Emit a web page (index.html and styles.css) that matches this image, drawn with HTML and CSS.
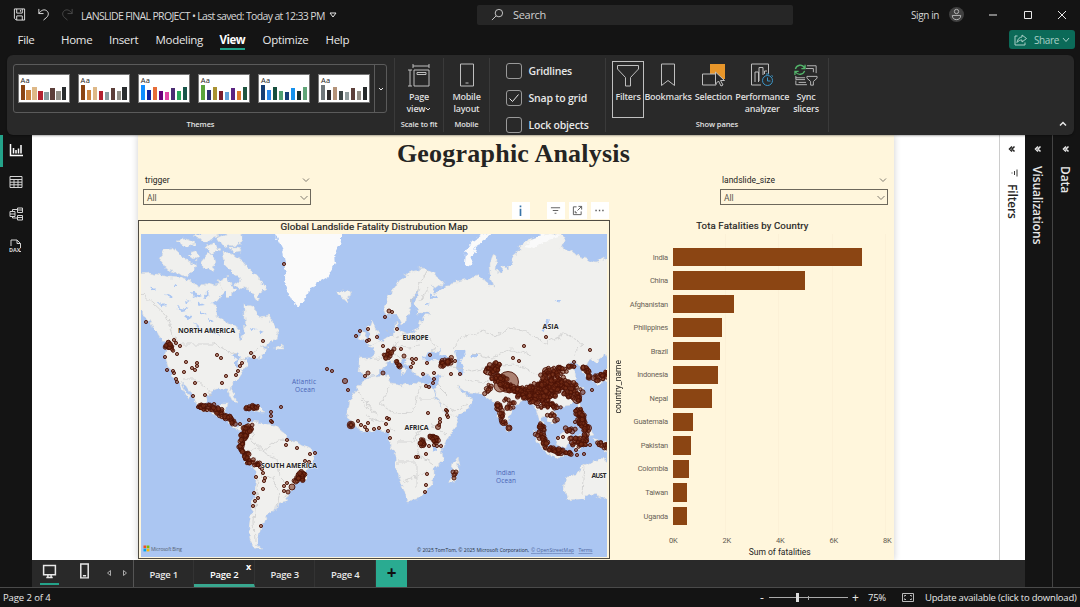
FILE: index.html
```html
<!DOCTYPE html>
<html lang="en">
<head>
<meta charset="utf-8">
<title>LANSLIDE FINAL PROJECT</title>
<link rel="stylesheet" href="styles.css">
</head>
<body>
<div class="app">
  <header class="titlebar">
    <svg class="ico" viewBox="0 0 14 14"><path d="M1.500 1h11v12H3.500l-2-2zM4 1v4.500h6V1M4 13V8.500h6V13M8 2v2"/></svg>
    <svg class="ico" viewBox="0 0 14 14"><path d="M2 1v5h5M2 6C4.500 2 8 1 10.500 3s2 5 0 7L7 13"/></svg>
    <svg class="ico dim" viewBox="0 0 14 14"><path d="M12 1v5H7M12 6C9.500 2 6 1 3.500 3s-2 5 0 7L7 13"/></svg>
    <span class="doc">LANSLIDE FINAL PROJECT • Last saved: Today at 12:33 PM</span>
    <svg class="tri" viewBox="0 0 8 6"><path d="M1 1h6L4 5z"/></svg>
    <div class="search"><svg class="ico" viewBox="0 0 14 14"><circle cx="8.500" cy="5.500" r="4"/><path d="M5.500 8.500L1 13"/></svg><span>Search</span></div>
    <span class="signin">Sign in</span>
    <svg class="avatar" viewBox="0 0 16 16"><circle class="disc" cx="8" cy="8" r="8"/><circle cx="8" cy="4.800" r="2.300"/><path d="M3.500 9h9c0 3-2 4.500-4.500 4.500S3.500 12 3.500 9z"/></svg>
    <div class="wins">
      <svg viewBox="0 0 10 10"><path d="M1 5h8"/></svg>
      <svg viewBox="0 0 10 10"><path d="M1.500 1.500h7v7h-7z"/></svg>
      <svg viewBox="0 0 10 10"><path d="M1 1l8 8M9 1L1 9"/></svg>
    </div>
  </header>
  <nav class="menu">
    <span>File</span><span>Home</span><span>Insert</span><span>Modeling</span><span><b>View</b></span><span>Optimize</span><span>Help</span>
    <div class="share"><svg viewBox="0 0 14 12"><path d="M3.500 2H1v9h10V8.500M8 1l4.500 3.500L8 8V6C6 6 4.500 6.500 3 8.500 3.500 5 5.500 3.200 8 3z"/></svg><span>Share</span><svg class="chev" viewBox="0 0 8 6"><path d="M1 1l3 3.500L7 1"/></svg></div>
  </nav>

  <section class="ribbon">
    <div class="group themes">
      <div class="gallery"><div class="thumbs" id="thumbs"></div><div class="more"><svg viewBox="0 0 8 6"><path d="M2 2l2 2 2-2"/></svg></div></div>
      <div class="caption">Themes</div>
    </div>
    <div class="group scale">
      <div class="cmd"><svg viewBox="0 0 24 24"><path d="M6 1v4M22 1v4M6 3h16M1 7h4M1 23h4M3 7v16M7 7h15v16H7zM10 9.500h9v2h-9z"/></svg><span>Page<br>view<svg class="caret" viewBox="0 0 6 6"><path d="M1 2l2 2 2-2"/></svg></span></div>
      <div class="caption">Scale to fit</div>
    </div>
    <div class="group mobile">
      <div class="cmd"><svg viewBox="0 0 24 24"><path d="M5.500 1h13v22h-13zM10.500 20h3"/></svg><span>Mobile<br>layout</span></div>
      <div class="caption">Mobile</div>
    </div>
    <div class="group checks">
      <div><i class="box"></i>Gridlines</div>
      <div><i class="box"><svg viewBox="0 0 14 14"><path d="M2.500 7.500l3 3 6-7"/></svg></i>Snap to grid</div>
      <div><i class="box"></i>Lock objects</div>
    </div>
    <div class="group panes">
      <div class="cmds">
        <div class="cmd sel"><svg viewBox="0 0 24 24"><path d="M1.500 1.500h21v3.500l-8 8.500v8.500h-5v-8.500L1.500 5z"/></svg><span>Filters</span></div>
        <div class="cmd"><svg viewBox="0 0 24 24"><path d="M5.500 1h13v21.500L12 17.500l-6.500 5z"/></svg><span>Bookmarks</span></div>
        <div class="cmd"><svg viewBox="0 0 24 24"><path class="orange" d="M8 1h15v15H8z"/><path class="mask" d="M.5 11h13.500v11H.5z"/><path class="mask" d="M13.500 9v12l3-3 2.500 5 2-1-2.500-4.500h4z"/></svg><span>Selection</span></div>
        <div class="cmd"><svg viewBox="0 0 24 24"><path d="M11 22H1.500V1h17v10M5 19V9h3.500v10M9 18V4.500h4V12M14.500 11V8H17"/><g class="blue"><circle cx="17.500" cy="17.500" r="5"/><path d="M17.500 14.500v3.500h3M16 11h3M21.500 12.500l1.500 1"/></g></svg><span>Performance<br>analyzer</span></div>
        <div class="cmd"><svg viewBox="0 0 26 24"><path d="M14 2h10v8M13 5h8v4M2 13v4h10M2 15h10M2 18v4.500h12M5 20h8"/><path class="mask" d="M14 13.500h11v2L21 19v4h-3v-4l-4-3.500z"/><path class="green" d="M12 1v4H8M1 12V8h4M1.500 5.500C3 .5 9 0 11.500 4.500M11.500 7.500C10 12 4 12.500 1.500 8.500"/></svg><span>Sync<br>slicers</span></div>
      </div>
      <div class="caption">Show panes</div>
    </div>
    <svg class="collapse" viewBox="0 0 10 8"><path d="M2 5.500l3-3 3 3"/></svg>
  </section>

  <main class="main">
    <aside class="rail">
      <div class="on"><svg viewBox="0 0 14 14"><path d="M1.500 1v11.500H14M4.500 10.500V5M7 10.500V7M9.500 10.500V5.500M12 10.500V2" stroke-width="1.500"/></svg></div>
      <div><svg viewBox="0 0 14 14"><path d="M1 1.500h12v11H1zM1 4.500h12M1 7.200h12M1 9.800h12M5 4.500v8M9 4.500v8"/></svg></div>
      <div><svg viewBox="0 0 14 14"><path d="M1 4.500h5v5H1zM1 7h5M8.500 1h5v4.500h-5zM8.500 3h5M8.500 8.500h5V13h-5zM8.500 10.500h5M3.500 4.500V2.500h5M3.500 9.500v1.500h5"/></svg></div>
      <div><svg viewBox="0 0 14 14"><path d="M2 7V1h6l3.500 3.500V9M8 1v3.500h3.500M10 12.500h2"/><text x="0" y="12.500">DAX</text></svg></div>
    </aside>

    <div class="stage">
      <div class="canvas">
        <article class="report">
          <h1>Geographic Analysis</h1>
          <div class="slicers">
            <div class="slicer"><div class="lab"><span>trigger</span><svg viewBox="0 0 8 6"><path d="M1 1.500l3 3 3-3"/></svg></div><div class="drop"><span>All</span><svg viewBox="0 0 8 6"><path d="M.5 1l3.500 3.500L7.500 1"/></svg></div></div>
            <div class="slicer"><div class="lab"><span>landslide_size</span><svg viewBox="0 0 8 6"><path d="M1 1.500l3 3 3-3"/></svg></div><div class="drop"><span>All</span><svg viewBox="0 0 8 6"><path d="M.5 1l3.500 3.500L7.500 1"/></svg></div></div>
          </div>
          <div class="visuals">
            <section class="mapvis">
              <div class="tools">
                <i><svg viewBox="0 0 12 12"><path class="info" d="M6 .5v2M6 4v8"/></svg></i>
                <i><svg viewBox="0 0 12 12"><path d="M1 3h10M3 6h6M5 9h2"/></svg></i>
                <i><svg viewBox="0 0 12 12"><path d="M5 2H1.500v8.500h8.500V7M7 1.500h3.500V5M10.500 1.500L6 6M3.500 6.500v2h2"/></svg></i>
                <i><svg viewBox="0 0 12 12"><path class="dots" d="M1.500 6h1.500M5.300 6h1.500M9 6h1.500"/></svg></i>
              </div>
              <h2>Global Landslide Fatality Distrubution Map</h2>
              <svg class="map" viewBox="141 234 466 323">
                <defs><filter id="coast" x="-5%" y="-5%" width="110%" height="110%"><feTurbulence type="fractalNoise" baseFrequency="0.16" numOctaves="3" seed="4"/><feDisplacementMap in="SourceGraphic" scale="7" xChannelSelector="R" yChannelSelector="G"/></filter></defs>
                <rect class="sea" x="141" y="234" width="468" height="325"/>
                <g filter="url(#coast)">
                  <g class="land">
                    <path d="M136 274L150 273 160 275 170 277 181 278 190 281 199 287 209 283 217 285 224 281 229 287 221 295 215 305 216 316 228 323 238 328 240 339 245 333 244 318 244 304 254 307 260 318 269 316 276 328 279 337 268 344 261 347 267 348 261 357 252 358 246 364 242 372 236 381 230 388 235 397 237 402 233 400 228 390 216 389 209 394 206 404 211 412 219 412 222 403 227 403 225 413 233 416 232 425 239 427 246 425 244 431 233 429 225 419 212 414 200 409 193 397 186 386 180 382 190 398 187 397 178 383 173 376 168 366 165 354 167 345 160 337 151 324 146 316 136 308z"/>
                    <path d="M243 431L250 422 262 423 273 425 283 432 288 440 300 444 315 452 314 461 308 470 306 480 296 485 291 492 286 501 278 503 276 510 269 513 264 520 261 528 258 538 257 544 263 549 256 549 250 541 249 526 252 509 254 496 256 481 255 471 246 462 240 450 238 443z"/>
                    <path d="M383 307L388 298 395 287 402 277 414 270 424 268 433 273 443 281 442 287 432 285 435 293 445 288 450 282 463 280 477 276 485 280 489 286 494 286 490 274 489 264 493 254 497 260 496 271 501 273 502 264 508 269 513 264 511 259 519 252 519 246 528 239 540 237 548 230 565 236 562 248 578 256 596 262 615 255 615 352 604 356 597 362 590 359 587 365 592 376 586 376 581 366 573 360 568 364 575 371 576 381 582 389 579 398 571 405 558 407 552 405 556 416 555 421 550 423 545 415 541 417 545 429 541 424 537 413 534 403 526 399 516 405 510 414 507 427 502 425 497 411 494 402 487 397 477 393 466 392 457 386 461 391 471 398 472 403 463 413 449 419 442 409 434 389 439 383 443 375 431 376 421 373 420 377 415 375 411 367 402 359 400 362 406 370 403 374 395 362 387 362 382 369 375 375 367 376 358 371 360 358 373 358 374 350 368 346 380 342 389 336 395 331 395 323 399 330 407 334 418 329 421 320 430 313 418 313 414 303 420 288 411 298 411 308 407 319 401 324 397 315 386 315z"/>
                    <path d="M367 377L383 375 389 376 391 384 403 386 414 382 427 384 432 389 439 404 446 416 455 415 459 417 456 427 447 439 442 449 443 461 434 468 434 477 429 487 420 498 408 501 403 488 397 470 396 456 390 443 387 431 379 430 365 433 354 427 347 417 350 401 357 388z"/>
                    <path d="M564 488L566 478 576 475 582 466 594 461 602 458 615 470 615 496 602 499 592 494 580 499 567 500z"/>
                    <path d="M449 482l4-18 4-6 2 8-5 17zM366 344l4-7-2-7 4-10 4 10 4 11-5 3zM358 339l3-9 5 3-2 7zM337 292l7-1 7-1 1 5-6 5-7-2zM507 425l3 1 0 6-4-1z"/>
                    <path d="M534 430l7 5 12 18-5 1-11-12zM549 452l10 2 8 3-8 1-10-3zM556 438l11-9 5 3-5 16-9-1zM577 401l6 9 3 13 8 11-8 1-5-13-4-9zM573 437l9-2-5 6 4 8-8-1zM592 439l14 3 8 8-10 1zM593 381l8-5 8-10 5 2-6 12-12 5z"/>
                    <path d="M245 406l13 2 8 4-8 0-12-4zM275 346l7-2 1 5-8 0z"/>
                    <path d="M164 249l8 -1 10 8 15 10-9 11-12-4-9-4-6-8zM176 240l10-1 9 4-8 5zM193 236l14-5 12 5-13 5zM202 260l5-6 7 1 2 7-4 9-10-3zM206 246l9-3 4 8-8 3zM222 252l9 1 11 8 6 7 9 7 10 14-6 1-3 13-9-14-15-3 8-6-10-8-8-9zM217 238l12-6 14 0-3 12-17 3zM218 280l8-3 9 13-6 6-7-7zM187 254l8-3 5 6-5 4zM230 247l8 0 3 5-8 1z"/>
                  </g>
                  <path class="ice" d="M272 228L283 250 285 263 284 279 291 299 298 308 304 299 315 284 328 276 336 263 335 253 341 240 341 228zM465 264l1-13 6-9 10-7 10-3-7 8-9 6-4 10-1 10zM524 246l10-8 15-5 13 3-16 5-10 7z"/>
                  <path class="water" d="M424 358l4-8 8 2 5-4-1 5 10 5-7 4-9-2-9 2zM455 350l8 0 1 6-3 6 5 11-5 3-5-8 1-8zM471 354l5-1 0 5-4 1zM556 300l5 0-2 4zM541 332l7-13 1 3-5 11zM231 356l7-3 4 4-8 2zM235 361l3-3 1 9-4-1zM244 360l8-1-3 4zM432 446l5 0-1 5-4-1zM404 277l-4 10zM165 294l9 4-5 1zM177 306l12 3-8 2zM192 291l9 4-7 3zM209 290l-7 8 5-2zM194 322l8 8-3 1zM201 311l7 5-7-2zM151 286l5 5-6-1zM210 328l10 7-10-3zM429 293l9 4-9 1zM425 302l5 2-5 1zM173 283l5 4-4 0zM184 299l7 3-6 1zM199 302l6 3-7 1zM186 314l5 4-4 1zM219 300l-7 4 3 1zM208 318l5 3-5 0zM160 303l7 3-6 1zM250 326l6 2-5 2zM259 330l5 2-4 1z"/>
                  <path class="line" d="M173 344h42l16 9 14 8 15-13M184 379l12 0 9 8 7 8M176 343l-11-29-23-21M251 424l2 17 11 10 14-11 22 1M247 453l9-6 11 8 10 3 3 19 10 10-5 11M256 456l6 11-1 12 11-1 7 13-3 16M258 478l-2 22-2 20 1 22M386 330l10 8 7-5 12 7 14-3 8 11-10 5M375 358l16 1 2-14 14 2 14-1M397 341l-5 12 10 7 13-3M429 287l-9 15M411 301l8-15 9-17M454 348l7-11 22-6 13 5 13-8 15 2 20 13 22-9 16 9-9 14M473 353l18 5 20-8 20 6M490 366l25-2 22 10 21-2M449 366l23 5 15-3 6 12M465 380l20 3 13-9M515 389l13 4 15-8M391 386l-11 18 15 10 18-1 7-27M420 399l16 0M361 401l18 16M357 391l22 26M365 416l22 8 9 8M397 442h15l10-14M398 462h18v26M404 482l25-11M423 439l19 6M416 436l3 21 15 8M431 423l14 11M440 401l14 10 14-8M436 383l13 13M584 464l-2 31"/>
                </g>
                <g id="bubbles"></g>
                <g class="place">
                  <text x="178" y="332.500" textLength="57">NORTH AMERICA</text><text x="261" y="467.500" textLength="56">SOUTH AMERICA</text><text x="402.500" y="340" textLength="26">EUROPE</text><text x="542.500" y="328.500" textLength="16">ASIA</text><text x="404.500" y="430" textLength="24">AFRICA</text><text x="591.500" y="478" textLength="15">AUST</text>
                </g>
                <g class="ocean"><text x="292" y="383.500" textLength="24">Atlantic</text><text x="295" y="391.500" textLength="20">Ocean</text><text x="496" y="474.500" textLength="19">Indian</text><text x="496" y="482.500" textLength="20">Ocean</text></g>
                <g class="credit"><path fill="#f25022" d="M143.500 545.500h2.700v2.700h-2.700z"/><path fill="#7fba00" d="M146.700 545.500h2.700v2.700h-2.700z"/><path fill="#00a4ef" d="M143.500 548.700h2.700v2.700h-2.700z"/><path fill="#ffb900" d="M146.700 548.700h2.700v2.700h-2.700z"/><text class="bing" x="151" y="550.500" textLength="31">Microsoft Bing</text><text x="417" y="552" textLength="112">© 2025 TomTom, © 2025 Microsoft Corporation,</text><text class="link" x="531" y="552" textLength="43">© OpenStreetMap</text><text class="link" x="578.500" y="552" textLength="14">Terms</text></g>
              </svg>
            </section>
            <section class="chart">
              <h2>Tota Fatalities by Country</h2>
              <div class="plot"><div class="ytitle"><span>country_name</span></div><div class="rows" id="rows"></div></div>
              <div class="ticks"><span>0K</span><span>2K</span><span>4K</span><span>6K</span><span>8K</span></div>
              <div class="xtitle">Sum of fatalities</div>
            </section>
          </div>
        </article>
      </div>
      <footer class="tabs">
        <div class="views">
          <div class="active"><svg viewBox="0 0 14 14"><path d="M1.500 1.500h11v8.500h-11zM4 12.500h6M5.500 10v2.500M8.500 10v2.500" stroke-width="1.400"/></svg></div>
          <div><svg viewBox="0 0 14 16"><path d="M3.500 1h7v13h-7zM5.500 12h3" stroke-width="1.400"/></svg></div>
          <svg class="arr" viewBox="0 0 6 8"><path d="M4.500 1.500v5L1.500 4z"/></svg><svg class="arr" viewBox="0 0 6 8"><path d="M1.500 1.500v5L4.500 4z"/></svg>
        </div>
        <div class="tab">Page 1</div><div class="tab cur">Page 2<i>x</i></div><div class="tab">Page 3</div><div class="tab">Page 4</div><div class="add">+</div>
      </footer>
    </div>

    <aside class="pane light"><svg viewBox="0 0 8 8"><path d="M4 1.500L1.500 4 4 6.500M6.500 1.500L4 4 6.500 6.500"/></svg><svg class="fil" viewBox="0 0 8 8"><path d="M7 .5v7M4.500 2v4M2 3.500v1"/></svg><span>Filters</span></aside>
    <aside class="pane viz"><svg viewBox="0 0 8 8"><path d="M4 1.500L1.500 4 4 6.500M6.500 1.500L4 4 6.500 6.500"/></svg><span>Visualizations</span></aside>
    <aside class="pane data"><svg viewBox="0 0 8 8"><path d="M4 1.500L1.500 4 4 6.500M6.500 1.500L4 4 6.500 6.500"/></svg><span>Data</span></aside>
  </main>

  <footer class="status">
    <span class="pg">Page 2 of 4</span>
    <span class="sign">-</span><div class="slider"><i></i><b></b></div><span class="sign">+</span>
    <span class="pct">75%</span>
    <svg viewBox="0 0 12 9"><path d="M.5.5h11v8H.5zM2.500 3.500v-1h1.500M8 2.500h1.500v1M2.500 5.500v1h1.500M8 6.500h1.500v-1"/></svg>
    <span class="upd">Update available (click to download)</span>
  </footer>
</div>
<script src="script.js"></script>
</body>
</html>
```
FILE: styles.css
```css
* { box-sizing: border-box; }
body { margin: 0; background: #141414; font-family: "Open Sans", "Noto Sans", sans-serif; color: #e8e8e8; overflow: hidden; }
svg { display: block; fill: none; stroke: currentColor; }
h1, h2 { margin: 0; }
i { font-style: normal; }
.app { width: 1080px; height: 607px; display: grid; grid-template-rows: 29px 26px 79.500px 452.500px 20px; }

.titlebar { display: flex; align-items: center; padding-left: 13px; font-size: 10.500px; }
.titlebar svg { flex: none; }
.titlebar .ico { width: 13px; height: 13px; margin-right: 11px; }
.titlebar .dim { color: #4c4c4c; margin-right: 7px; }
.doc { width: 245px; letter-spacing: -.68px; word-spacing: .1px; white-space: nowrap; padding-top: 3px; color: #d8d8d8; }
.tri { width: 8px; height: 6px; margin-left: 3px; }
.search { width: 316px; height: 20px; margin-left: 140px; background: #262626; border-radius: 2px; display: flex; align-items: center; padding-left: 14px; font-size: 11px; letter-spacing: -.3px; color: #d0d0d0; }
.search .ico { margin-right: 9px; }
.signin { width: 38px; margin-left: 118px; letter-spacing: -.4px; white-space: nowrap; font-size: 10px; color: #d5d5d5; }
.avatar { width: 15px; height: 15px; color: #bbb; }
.disc { fill: #404040; stroke: none; }
.wins { display: flex; gap: 24.500px; margin-left: 24px; }
.wins svg { width: 10px; height: 10px; }

.menu { display: grid; grid-template-columns: 43.500px 48px 46.500px 64px 43px 63px 683.500px 66px; padding-left: 17.500px; font-size: 11.500px; letter-spacing: -.3px; line-height: 22px; }
.menu b { display: inline-block; color: #fff; border-bottom: 2px solid #1fa58a; height: 21px; letter-spacing: -.55px; }
.share { grid-column: 8; height: 19px; margin-top: 1px; border-radius: 3px; background: #0b6a58; display: flex; align-items: center; padding-left: 5px; gap: 6px; font-size: 10px; letter-spacing: -.4px; color: #a8cfc6; }
.share svg { width: 14px; height: 12px; flex: none; }
.share .chev { width: 8px; height: 6px; margin-left: -3px; }

.ribbon { position: relative; z-index: 2; margin: 0 6px 0 7px; background: #292929; border-radius: 6px; display: flex; overflow: hidden; box-shadow: 0 1px 2px #0005; }
.group { display: flex; flex-direction: column; border-right: 1px solid #3a3a3a; margin: 3px 0; }
.themes { width: 388px; padding-left: 5px; }
.gallery { margin: 6px 7px 0 1px; height: 49px; border: 1px solid #5b5b5b; border-radius: 3px; display: flex; }
.thumbs { width: 361px; border-right: 1px solid #5b5b5b; display: flex; gap: 8.100px; padding: 9px 3.500px; flex: none; }
.thumb { width: 52px; height: 29px; background: #fff; padding: 0 2px 2px; display: flex; flex-direction: column; justify-content: space-between; border: 1px solid #777; color: #222; font-size: 7.500px; line-height: 10px; letter-spacing: .3px; }
.thumb div { display: flex; align-items: flex-end; gap: 1.900px; height: 15px; }
.thumb i { width: 4.300px; }
.more { flex: 1; display: grid; place-items: center; }
.more svg { width: 8px; }
.caption { font-size: 7.500px; line-height: 10px; font-weight: 600; text-align: center; color: #e2e2e2; margin-top: auto; padding-bottom: 3px; white-space: nowrap; letter-spacing: -.1px; }
.themes .caption { padding-right: 5px; }
.panes .caption { padding-right: 6px; }
.scale { width: 49px; } .mobile { width: 46px; }
.cmd { display: flex; flex-direction: column; align-items: center; text-align: center; font-size: 9px; font-weight: 600; line-height: 12.500px; letter-spacing: -.24px; color: #dedede; white-space: nowrap; padding-top: 5px; }
.cmd > svg { width: 24px; height: 24px; margin-bottom: 3.500px; color: #bfbfbf; }
.caret { display: inline-block; width: 6px; height: 6px; }
.checks { width: 116px; padding: 4.500px 0 0 16px; font-size: 10.500px; font-weight: 600; letter-spacing: -.2px; gap: 11px; white-space: nowrap; }
.checks div { display: flex; gap: 6.500px; height: 16px; align-items: center; flex: none; }
.box { width: 16px; height: 16px; border: 1px solid #9a9a9a; border-radius: 3px; }
.panes { width: 223px; padding-left: 6px; }
.cmds { display: grid; grid-template-columns: 32px 48px 43px 54.500px 33px; }
.sel { height: 57px; margin-top: 3px; padding-top: 1.500px; border: 1px solid #c0c0c0; }
.orange { fill: #e8962a; stroke: none; } .mask { fill: #292929; }
.blue { stroke: #3c97c9; } .green { stroke: #53b56b; stroke-width: 1.400; }
.collapse { width: 10px; height: 8px; position: absolute; right: 6px; bottom: 7px; stroke-width: 1.500; }

.main { display: flex; }
.rail { width: 32.400px; flex: none; color: #d4d4d4; }
.rail div { height: 32px; display: grid; place-items: center; border-left: 3px solid transparent; padding: 0 3px 1px 0; }
.rail svg { width: 14px; height: 14px; }
.rail .on { color: #fff; border-color: #24a38a; }
.rail text { font-size: 5.500px; fill: currentColor; stroke: none; font-weight: 700; }
.stage { width: 966.600px; flex: none; display: grid; grid-template-rows: 425px 27.500px; }
.canvas { background: #fff; padding-left: 105.600px; overflow: hidden; }
.report { width: 756px; height: 425px; background: #fff6dc; box-shadow: 0 0 7px #0003; display: grid; grid-template-rows: 39px 46px 340px; color: #252423; }
h1 { font: bold 26px/37px "Liberation Serif", serif; text-align: center; padding-right: 5px; letter-spacing: .22px; }
.slicers { display: flex; justify-content: space-between; padding: 0 6px 0 5px; }
.slicer { width: 168px; font: 8.500px/12px Roboto, sans-serif; }
.lab { display: flex; justify-content: space-between; align-items: center; padding: 0 1px 0 2px; height: 13px; }
.slicer svg { width: 8px; height: 6px; color: #807b70; }
.drop { margin-top: 2.500px; height: 16px; border: 1px solid #6d685c; display: flex; align-items: center; justify-content: space-between; padding: 1px 2px 0 3px; color: #5a564d; }
.visuals { display: flex; }
.mapvis { position: relative; width: 472.500px; height: 339px; border: 1px solid #4f4b42; border-top-width: 1.500px; padding: 0 2px; flex: none; }
h2 { font: 400 9.800px/11.500px Roboto, sans-serif; letter-spacing: .08px; text-align: center; -webkit-text-stroke: .2px; }
.mapvis h2 { height: 13px; }
.map { width: 466px; height: 323px; stroke: none; overflow: hidden; }
.tools { position: absolute; right: .5px; top: -18.500px; display: flex; gap: 4px; }
.tools i { width: 18px; height: 17px; background: #fff; display: grid; place-items: center; }
.tools i:first-child { margin-right: 13px; }
.tools svg { width: 11px; height: 11px; color: #555; }
.info { stroke-width: 1.800; stroke: #3974a8; } .dots { stroke-width: 1.500; }
.sea { fill: #abc6f2; } .land { fill: #f0f0ee; stroke: #dddddb; stroke-width: .5; }
.ice { fill: #fafafa; } .water { fill: #abc6f2; }
.line { stroke: #c9c9c9; stroke-width: .7; fill: none; }
#bubbles { fill: #7b321a; fill-opacity: .58; stroke: #4d1307; stroke-width: .9; }
.place { font: bold 7px "Open Sans", sans-serif; fill: #282828; stroke: #fff; stroke-width: 1px; stroke-opacity: .6; paint-order: stroke; }
.ocean { font: 6.500px "Open Sans", sans-serif; fill: #4964b5; }
.credit { font: 5px "Open Sans", sans-serif; fill: #25303d; }
.bing { fill: #586475; } .link { fill: #5068a0; text-decoration: underline; }
.chart { flex: 1; font-family: Roboto, sans-serif; }
.chart h2 { line-height: 12px; height: 14px; font-size: 9.600px; letter-spacing: .15px; }
.plot { display: flex; height: 301px; }
.ytitle { width: 14px; display: grid; place-items: center; padding: 6px 0 0 2px; }
.ytitle span { writing-mode: vertical-rl; transform: rotate(180deg); font-size: 8.500px; line-height: 12px; }
.rows { padding-top: 14.300px; display: flex; flex-direction: column; gap: 5.050px; width: 263px; background: repeating-linear-gradient(to right, transparent 0 52.500px, #fcf1d7 52.500px 53.500px) 48px 0 no-repeat; }
.row { height: 18.500px; display: flex; align-items: center; }
.row span { width: 43.500px; margin-right: 5px; text-align: right; font-size: 7.500px; letter-spacing: -.2px; color: #696257; }
.row div { height: 18.500px; background: #8b4513; }
.ticks { display: flex; margin: 0 -20px 0 36px; font-size: 7.500px; line-height: 12px; letter-spacing: -.2px; color: #5f5a50; }
.ticks span { width: 53.500px; text-align: center; flex: none; }
.xtitle { text-align: center; font-size: 8.500px; line-height: 11px; padding-left: 55px; }

.tabs { background: #292929; display: flex; width: 993px; font-size: 9.500px; font-weight: 600; letter-spacing: -.27px; line-height: 29px; }
.views { width: 101.600px; border-right: 1px solid #555; display: flex; align-items: center; padding-left: 8px; flex: none; }
.views div { width: 19px; height: 24px; margin-right: 16px; padding-top: 2px; border-bottom: 2px solid transparent; display: grid; justify-items: center; flex: none; }
.views div svg { width: 15px; height: 17px; }
.views .active { border-color: #24a38a; }
.arr { width: 6px; height: 8px; margin-right: 10px; color: #aaa; flex: none; }
.arr:last-child { margin-right: 0; }
.views div:nth-child(2) { margin-right: 12px; }
.tab { width: 60.500px; text-align: center; border-right: 1px solid #333; position: relative; flex: none; }
.cur { border-bottom: 3px solid #38a78f; color: #fff; }
.cur i { position: absolute; right: 3px; top: -8px; font-size: 9px; font-weight: 700; }
.add { width: 31px; background: #2aab91; color: #111; font-size: 17px; font-weight: 700; text-align: center; line-height: 26px; }
.pane { flex: none; display: flex; flex-direction: column; align-items: center; font-size: 12px; font-weight: 600; padding-top: 10.500px; line-height: 16px; height: 425px; }
.pane svg { width: 8px; height: 8px; margin-bottom: 12.500px; stroke-width: 1.500; flex: none; }
.pane span { writing-mode: vertical-rl; letter-spacing: -.08px; margin-right: 2px; }
.light { width: 26px; background: #fff; border-left: 1px solid #ccc; color: #252423; padding-right: 1px; }
.light .fil { margin: 3px 0 7px 5px; stroke-width: .9; }
.light span { letter-spacing: -.15px; margin-right: 0; }
.viz { width: 28px; height: 452.500px; border-right: 1px solid #444; background: #141414; }
.data { width: 27px; }
.data span { margin-right: 3px; }

.status { border-top: 1px solid #4a4a4a; display: flex; align-items: center; padding-left: 3px; font-size: 9.500px; letter-spacing: -.25px; white-space: nowrap; z-index: 1; background: #141414; }
.pg { width: 757px; letter-spacing: -.1px; }
.sign { width: 9px; font-size: 12px; line-height: 12px; }
.slider { width: 79px; height: 10px; margin-right: 4px; display: flex; align-items: center; background: linear-gradient(#aaa, #aaa) center / 100% 1px no-repeat; }
.slider i { width: 3px; height: 9px; margin-left: 27px; background: #ddd; }
.slider b { width: 1px; height: 4px; margin-left: 9px; background: #aaa; }
.pct { width: 34px; padding-left: 7px; margin-right: 7px; }
.status svg { width: 12px; height: 9px; color: #bbb; flex: none; }
.upd { margin-left: 11px; letter-spacing: -.2px; }
```
FILE: script.js
```js
// Theme gallery thumbnails
const palettes = [
  '#8b4513 #cd853f #deb887 #b22230 #8a9da0 #5c3f3a #918f87 #292d2f',
  '#8b4513 #cd853f #deb887 #b22230 #8a9da0 #5c3f3a #918f87 #292d2f',
  '#118dff #12239e #e66c37 #6b007b #e044a7 #4b2d73 #28a65a #18564a',
  '#5ba33c #2c3170 #a99131 #7a1d2c #62a2d8 #5b2482 #dc7b2b #1f5540',
  '#173e75 #2787ed #16503f #4f9e72 #173f78 #1691ec #17302f #60a578',
  '#70777b #2d2a2b #b39278 #3c4545 #909c9d #5d403b #918c84 #262a2b'
];
const heights = [15, 10, 13, 9, 8, 12, 9, 13];
document.getElementById('thumbs').innerHTML = palettes.map(p =>
  '<div class="thumb">Aa<div>' + p.split(' ').map((c, i) =>
    `<i style="height:${heights[i]}px;background:${c}"></i>`).join('') + '</div></div>').join('');

// Fatalities by country, bar width in pixels
const countries = [['India', 189.5], ['China', 132.5], ['Afghanistan', 61.5], ['Philippines', 49.5], ['Brazil', 47], ['Indonesia', 45.5],
  ['Nepal', 39.5], ['Guatemala', 20.5], ['Pakistan', 18], ['Colombia', 16.5], ['Taiwan', 14.5], ['Uganda', 14.5]];
document.getElementById('rows').innerHTML = countries.map(([n, w]) =>
  `<div class="row"><span>${n}</span><div style="width:${w}px"></div></div>`).join('');

// Map bubbles: single events as "x,y[,r]"
const single = `284,264 146,322 174,340 176,343 180,346 177,354 165,357 186,362 197,363 192,368 195,370 197,366 184,372 167,370 173,371 174,373
 176,379 177,382 195,383 217,355 221,358 251,353 254,357 263,341 242,363 240,366 238,371 236,375 226,376 222,383 205,395 193,396 198,407
 327,369 332,371 345,381,2.6 348,390 356,336 360,331 367,341 369,340 368,329 365,376 368,373,2
 385,317 389,311,2 392,312 397,329 377,337 383,346 401,349 394,349,2 404,356,2 412,359 416,359 413,363 411,367 430,355 427,363 423,374 434,373
 434,379 433,383 426,386 429,387 451,374 460,374 455,361 383,373,2 546,337 524,346 513,358 519,361 590,350 574,362
 281,407 272,422 271,412 271,416 271,421 249,420 240,424 233,421 287,440 286,445 297,448 315,453 310,454 305,461 309,462
 260,467 262,469 263,473 256,477 265,478 264,481 263,489 254,493 255,501 258,498 253,506 261,526 284,486 287,483 292,487,3 284,491 288,492,2
 351,425,3.8 351,425,2.6 351,425,1.8 358,421 361,425 368,423 365,427 367,430 374,429 379,428 387,418 389,419 386,424 388,431 390,438 428,413 447,411 447,415 448,417
 440,422 439,425 438,427,2.5 440,419 429,446 434,445 437,446 441,446 416,457 418,457 426,454 427,474 426,485 425,492
 446,410 455,474,2 454,478,2 453,472,2 456,472,2 454,475,2 592,390 575,422 509,428,3 509,428,2 563,437 558,438 606,445,2.6 600,444,3 590,445 586,445 584,454 577,455 576,450`;
const bubbles = single.trim().split(/\s+/).map(t => t.split(',').map(Number));

// Dense belts: [x1, y1, x2, y2, half width, count]
const belts = [
  [167, 345, 171, 348, 3, 20], [201, 407, 213, 407, 3, 26], [214, 409, 225, 415, 3, 28], [225, 415, 234, 423, 2, 18], [246, 407, 257, 407, 2, 18],
  [249, 426, 242, 440, 4, 46], [242, 438, 240, 448, 2, 14], [243, 451, 250, 463, 3, 26], [251, 461, 258, 465, 2, 10], [297, 480, 304, 474, 3.5, 34],
  [386, 357, 391, 352, 3, 16], [396, 360, 401, 370, 1, 8], [441, 365, 450, 360, 3, 22], [430, 436, 437, 441, 2, 26], [423, 438, 422, 446, 2, 12],
  [488, 372, 498, 366, 4, 44], [494, 375, 505, 383, 4, 54], [500, 385, 520, 391, 3, 60], [518, 392, 535, 395, 5, 70], [530, 393, 552, 389, 8, 130],
  [546, 373, 565, 369, 4, 28], [545, 378, 552, 392, 6, 70], [553, 377, 563, 390, 7, 70], [563, 385, 576, 394, 7, 60], [535, 401, 558, 403, 6, 46],
  [497, 402, 504, 423, 2, 30], [503, 402, 514, 407, 4, 14], [486, 392, 490, 386, 2, 8], [568, 366, 574, 367, 1, 7], [584, 366, 590, 377, 2, 20],
  [594, 380, 607, 374, 3, 30], [577, 395, 578, 400, 3, 12], [577, 410, 583, 420, 3, 46], [580, 420, 587, 430, 3, 46], [585, 433, 585, 440, 2, 10],
  [540, 424, 543, 430, 2, 14], [538, 431, 547, 447, 3, 30], [550, 449, 562, 452, 2, 36], [565, 453, 572, 454, 1, 8], [572, 440, 583, 444, 4, 28],
  [567, 430, 574, 430, 2, 9], [598, 442, 607, 447, 2, 9], [548, 415, 556, 419, 3, 8]
];
let seed = 17;
const rnd = () => (seed = (seed * 16807) % 2147483647) / 2147483647;
bubbles.push([508, 382, 10.5], [500, 386, 6], [488, 371, 4], [577, 399, 4.5], [588, 428, 3.5], [546, 371, 3.5]);
for (const [x1, y1, x2, y2, w, n] of belts)
  for (let k = 0; k < n; k++) {
    const t = rnd();
    bubbles.push([x1 + (x2 - x1) * t + (rnd() - .5) * 2 * w, y1 + (y2 - y1) * t + (rnd() - .5) * 2 * w, 1.5 + rnd() * .9]);
  }
document.getElementById('bubbles').innerHTML = bubbles.map(([x, y, r = 1.6]) =>
  `<circle cx="${x.toFixed(1)}" cy="${y.toFixed(1)}" r="${r.toFixed(1)}"/>`).join('');
```
